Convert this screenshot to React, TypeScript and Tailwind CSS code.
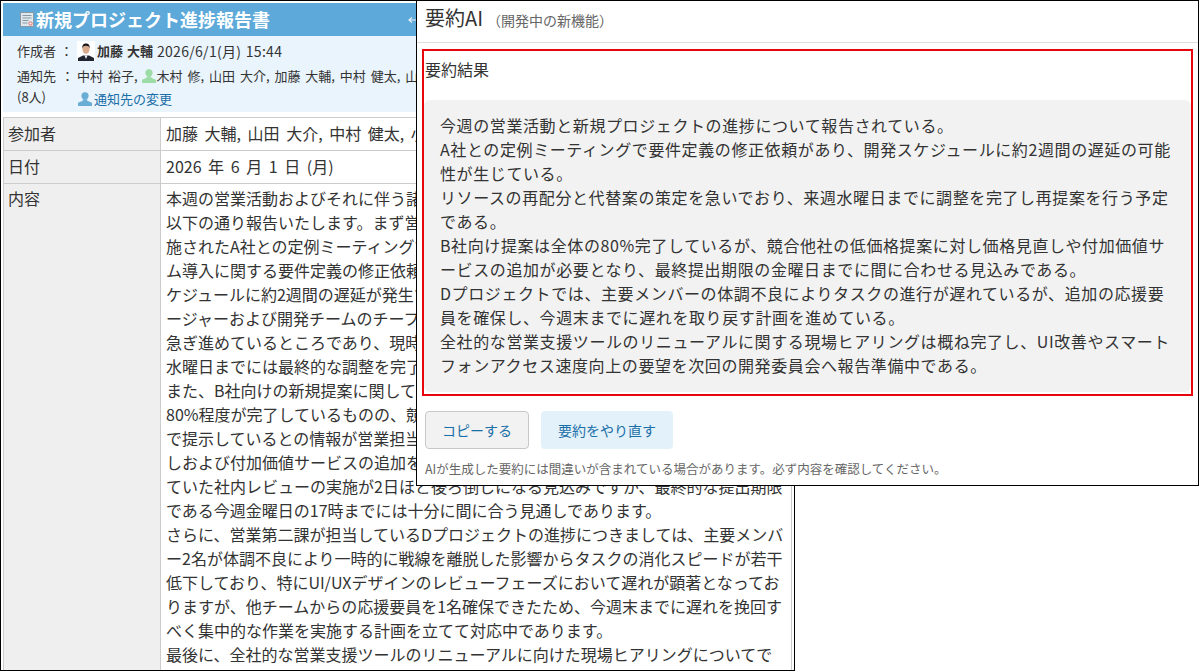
import React from 'react';

const bodyLines = [
    '本週の営業活動およびそれに伴う諸課題の進捗について、',
    '以下の通り報告いたします。まず営業第一課において実',
    '施されたA社との定例ミーティングでは、新しい基幹シス',
    'ム導入に関する要件定義の修正依頼がありました。開発ス',
    'ケジュールに約2週間の遅延が発生する可能性があり、マネ',
    'ージャーおよび開発チームのチーフと協議し代替案の策定を',
    '急ぎ進めているところであり、現時点の見込みとして、来週の',
    '水曜日までには最終的な調整を完了し再度提案いたします。',
    'また、B社向けの新規提案に関してですが、現在提案書の',
    '80%程度が完了しているものの、競合他社が低価格の提案',
    'で提示しているとの情報が営業担当より入りました。価格見直',
    'しおよび付加価値サービスの追加を検討しており、予定され',
    'ていた社内レビューの実施が2日ほど後ろ倒しになる見込みですが、最終的な提出期限',
    'である今週金曜日の17時までには十分に間に合う見通しであります。',
    'さらに、営業第二課が担当しているDプロジェクトの進捗につきましては、主要メンバ',
    'ー2名が体調不良により一時的に戦線を離脱した影響からタスクの消化スピードが若干',
    '低下しており、特にUI/UXデザインのレビューフェーズにおいて遅れが顕著となってお',
    'りますが、他チームからの応援要員を1名確保できたため、今週末までに遅れを挽回す',
    'べく集中的な作業を実施する計画を立てて対応中であります。',
    '最後に、全社的な営業支援ツールのリニューアルに向けた現場ヒアリングについてで',
];

const summaryLines = [
    '今週の営業活動と新規プロジェクトの進捗について報告されている。',
    'A社との定例ミーティングで要件定義の修正依頼があり、開発スケジュールに約2週間の遅延の可能',
    '性が生じている。',
    'リソースの再配分と代替案の策定を急いでおり、来週水曜日までに調整を完了し再提案を行う予定',
    'である。',
    'B社向け提案は全体の80%完了しているが、競合他社の低価格提案に対し価格見直しや付加価値サ',
    'ービスの追加が必要となり、最終提出期限の金曜日までに間に合わせる見込みである。',
    'Dプロジェクトでは、主要メンバーの体調不良によりタスクの進行が遅れているが、追加の応援要',
    '員を確保し、今週末までに遅れを取り戻す計画を進めている。',
    '全社的な営業支援ツールのリニューアルに関する現場ヒアリングは概ね完了し、UI改善やスマート',
    'フォンアクセス速度向上の要望を次回の開発委員会へ報告準備中である。',
];

const UserIcon = ({ color, className }: { color: string; className: string }) => (
    <svg viewBox="0 0 16 16" className={className}>
        <circle cx="8" cy="4.8" r="3.6" fill={color} />
        <path d="M5.800 8.200h4.400v1.600l4.800 2v3.200H1v-3.200l4.800-2z" fill={color} />
    </svg>
);

const ReportIcon = () => (
    <svg viewBox="0 0 14 15" className="h-[15px] w-[14px] shrink-0">
        <rect x="0.5" y="0.5" width="13" height="14" fill="#dfe8ec" stroke="#8a9aa5" />
        <path d="M2.500 3.500h9M2.500 6h9M2.500 8.500h6M2.500 11h5" stroke="#8a9aa5" strokeWidth="1" />
        <circle cx="10.500" cy="11.500" r="1.600" fill="#fff" stroke="#e0605a" />
    </svg>
);

const Portrait = () => (
    <svg viewBox="0 0 18 20" className="h-5 w-[18px] shrink-0">
        <rect width="18" height="20" fill="#fff" />
        <path d="M1 20v-3l5-2.500h6l5 2.500v3z" fill="#1f2430" />
        <path d="M7.500 14.500L9 18l1.500-3.500z" fill="#f3f3f3" />
        <ellipse cx="9" cy="8" rx="3.600" ry="4.800" fill="#d9a98c" />
        <path d="M5.300 7.500C5 3.500 7 2.400 9 2.400s4 1.100 3.700 5.100c-.5-2-1.600-2.700-3.700-2.700s-3.200.7-3.700 2.700z" fill="#17171b" />
    </svg>
);

const App: React.FC = () => {
    return (
        <div className="relative h-[671px] w-[1200px] overflow-hidden bg-white font-['Noto_Sans_CJK_JP','Liberation_Sans',sans-serif] text-[#333]">
            {/* Background report window */}
            <div className="h-[671px] w-[795px] overflow-hidden border border-black bg-white px-[2px] pt-[2px]">
                <div className="flex h-[33px] items-center gap-[2px] bg-[#5ca9da] pl-[17px]">
                    <ReportIcon />
                    <span className="w-[370px] text-[18px] font-bold text-white">新規プロジェクト進捗報告書</span>
                    <svg viewBox="0 0 10 8" className="h-2 w-[10px] shrink-0">
                        <path d="M1 4h8M4 1.500L1 4l3 2.500" fill="none" stroke="#e6eef3" strokeWidth="1.200" />
                    </svg>
                </div>
                <div className="h-[76px] bg-[#eaf4fc] pl-[14px] pt-[2px] text-[13px] leading-[24px] text-[#333] [word-spacing:1px]">
                    <div className="flex h-[25px] items-center">
                        <span className="w-[60px] shrink-0">作成者 ：</span>
                        <Portrait />
                        <span className="ml-[2px] font-bold">加藤 大輔</span>
                        <span className="ml-[4px] text-[14px] tracking-[0.3px]">2026/6/1(月) 15:44</span>
                    </div>
                    <div className="flex h-[25px] items-center whitespace-nowrap [word-spacing:2px]">
                        <span className="w-[60px] shrink-0">通知先 ：</span>
                        <span>中村 裕子,</span>
                        <UserIcon color="#9ddca6" className="ml-[3px] h-4 w-4" />
                        <span>木村 修, 山田 大介, 加藤 大輔, 中村 健太, 山田 一郎</span>
                    </div>
                    <div className="flex h-[22px] items-center">
                        <span className="w-[60px] shrink-0 self-start leading-[17px]">(8人)</span>
                        <UserIcon color="#6aaed6" className="h-4 w-4" />
                        <span className="ml-[1px] text-[#1a6fa8]">通知先の変更</span>
                    </div>
                </div>
                <div className="mt-[5px] grid h-[560px] grid-cols-[157px_1fr] grid-rows-[33px_33px_1fr] border border-b-0 border-[#ccc] text-[16px] leading-[24px]">
                    <div className="border-r border-b border-[#ccc] bg-[#efefef] pl-[4px] pt-[3px]">参加者</div>
                    <div className="overflow-hidden whitespace-nowrap border-b border-[#ccc] pl-[5px] pt-[3px] [word-spacing:3px]">加藤 大輔, 山田 大介, 中村 健太, 小林 美咲</div>
                    <div className="border-r border-b border-[#ccc] bg-[#efefef] pl-[4px] pt-[3px]">日付</div>
                    <div className="border-b border-[#ccc] pl-[5px] pt-[3px] [word-spacing:3px]">2026 年 6 月 1 日 (月)</div>
                    <div className="border-r border-[#ccc] bg-[#efefef] pl-[4px] pt-[2px]">内容</div>
                    <div className="whitespace-nowrap pl-[5px] pt-[2px]">
                        {bodyLines.map((line) => (
                            <div key={line} className="h-[24px]">{line}</div>
                        ))}
                    </div>
                </div>
            </div>

            {/* Summary panel on top */}
            <div className="absolute top-0 left-[416px] h-[486px] w-[783px] border border-black bg-white">
                <div className="flex h-[42px] items-center border-b border-[#ddd] pl-[8px]">
                    <span className="pb-[7px] text-[20px] text-[#333]">要約AI</span>
                    <span className="ml-[4px] pb-[2px] text-[14px] text-[#666]">（開発中の新機能）</span>
                </div>
                <div className="mx-[5px] mt-[6px] h-[347px] border-2 border-[#e8060c] pt-[6px]">
                    <div className="pl-[1px] text-[16px] leading-[24px]">要約結果</div>
                    <div className="mt-[19px] h-[292px] rounded-[6px] bg-[#f2f2f2] pl-[16px] pt-[13px] text-[16px] leading-[24px] tracking-[0.6px] whitespace-nowrap">
                        {summaryLines.map((line) => (
                            <div key={line}>{line}</div>
                        ))}
                    </div>
                </div>
                <div className="ml-[8px] mt-[15px] flex gap-[12px] text-[14px] text-[#1a6fa8]">
                    <button className="h-[38px] w-[104px] rounded-[4px] border border-[#c8c8c8] bg-[#f2f2f2]">コピーする</button>
                    <button className="h-[38px] w-[132px] rounded-[4px] bg-[#e3f1fa]">要約をやり直す</button>
                </div>
                <div className="ml-[8px] mt-[11px] text-[12.5px] text-[#666]">AIが生成した要約には間違いが含まれている場合があります。必ず内容を確認してください。</div>
            </div>
        </div>
    );
};

export default App;
